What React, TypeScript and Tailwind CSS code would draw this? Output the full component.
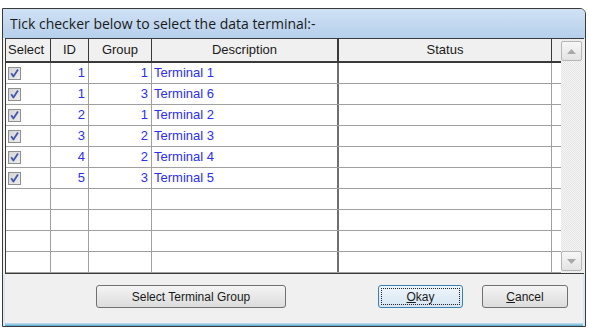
import React from "react";

const rows = [
  { sel: true, id: "1", group: "1", desc: "Terminal 1" },
  { sel: true, id: "1", group: "3", desc: "Terminal 6" },
  { sel: true, id: "2", group: "1", desc: "Terminal 2" },
  { sel: true, id: "3", group: "2", desc: "Terminal 3" },
  { sel: true, id: "4", group: "2", desc: "Terminal 4" },
  { sel: true, id: "5", group: "3", desc: "Terminal 5" },
  null,
  null,
  null,
  null,
];

function Check() {
  return (
    <svg width="13" height="13" viewBox="0 0 13 13">
      <defs>
        <linearGradient id="cb" x1="0" y1="0" x2="1" y2="1">
          <stop offset="0" stopColor="#d4d4d4" />
          <stop offset="1" stopColor="#eeeeee" />
        </linearGradient>
      </defs>
      <rect x="0.5" y="0.5" width="12" height="12" fill="url(#cb)" stroke="#8e8f8f" />
      <path d="M3.2 6.3 L5.4 9.6 L10 2.6" stroke="#4257ad" strokeWidth="1.8" fill="none" strokeLinejoin="round" />
    </svg>
  );
}

function Arrow({ up }: { up: boolean }) {
  return (
    <svg width="9" height="5" viewBox="0 0 9 5">
      {up ? <path d="M0 5 L4.5 0 L9 5 Z" fill="#a8a8a8" /> : <path d="M0 0 L4.5 5 L9 0 Z" fill="#a8a8a8" />}
    </svg>
  );
}

const font = { fontFamily: '"Liberation Sans", Arial, sans-serif' };

export default function App() {
  return (
    <div className="w-[589px] h-[332px] bg-white pt-[8px] pl-[2px] overflow-hidden" style={font}>
      <div className="w-[584px] h-[319px] border border-[#3a3a3a] rounded-tr-[6px] flex flex-col overflow-hidden bg-[#f0f0f0]">
        {/* title */}
        <div className="h-[29px] shrink-0 flex items-center pl-[7px] text-[#1a1a1a] bg-gradient-to-b from-[#d0e1f4] to-[#b6cfeb]" style={{ fontFamily: '"Open Sans", "Liberation Sans", sans-serif', fontSize: "14px" }}>
          Tick checker below to select the data terminal:-
        </div>
        {/* grid */}
        <div className="ml-[2px] w-[579px] h-[236px] shrink-0 flex border-t border-l border-b border-[#3a3a3a] bg-white">
          <div className="w-[555px] flex flex-col">
            {/* header */}
            <div className="h-[24px] flex border-b-2 border-[#3a3a3a] bg-[#f0f0f0] text-[13px] text-[#1a1a1a]">
              <div className="w-[45px] border-r border-[#3a3a3a] flex items-center pl-[2px]">Select</div>
              <div className="w-[38px] border-r border-[#3a3a3a] flex items-center justify-center">ID</div>
              <div className="w-[63px] border-r border-[#3a3a3a] flex items-center justify-center">Group</div>
              <div className="w-[187px] border-r-2 border-[#3a3a3a] flex items-center justify-center">Description</div>
              <div className="w-[213px] border-r border-[#3a3a3a] flex items-center justify-center">Status</div>
              <div className="flex-1" />
            </div>
            {rows.map((r, i) => (
              <div key={i} className="h-[21px] flex border-b border-[#a0a0a0] text-[13px] text-[#2e2ef0]">
                <div className="w-[45px] border-r border-[#a0a0a0] flex items-center pl-[2px]">
                  {r?.sel ? <Check /> : null}
                </div>
                <div className="w-[38px] border-r border-[#a0a0a0] flex items-center justify-end pr-[3px]">{r?.id}</div>
                <div className="w-[63px] border-r border-[#a0a0a0] flex items-center justify-end pr-[3px]">{r?.group}</div>
                <div className="w-[187px] border-r-2 border-[#707070] flex items-center pl-[2px]">{r?.desc}</div>
                <div className="w-[213px] border-r border-[#a0a0a0]" />
                <div className="flex-1" />
              </div>
            ))}
          </div>
          {/* scrollbar */}
          <div className="flex-1 flex flex-col justify-between py-[2px] pr-[2px] bg-[#ebebeb]" style={{ backgroundImage: "repeating-conic-gradient(#f4f4f4 0 25%, #e6e6e6 0 50%)", backgroundSize: "2px 2px" }}>
            <div className="h-[20px] border border-[#b5b5b5] rounded-[2px] bg-gradient-to-b from-[#f7f7f7] to-[#e3e3e3] flex items-center justify-center">
              <Arrow up />
            </div>
            <div className="h-[20px] border border-[#b5b5b5] rounded-[2px] bg-gradient-to-b from-[#f7f7f7] to-[#e3e3e3] flex items-center justify-center">
              <Arrow up={false} />
            </div>
          </div>
        </div>
        {/* buttons */}
        <div className="flex-1 flex flex-col border-l-2 border-r-2 border-[#dbe7f4]">
          <div className="flex items-start pt-[11px] text-[12px] text-[#1a1a1a]">
            <div className="ml-[91px] w-[190px] h-[23px] border border-[#707070] rounded-[3px] bg-gradient-to-b from-[#f4f4f4] to-[#dcdcdc] flex items-center justify-center">
              Select Terminal Group
            </div>
            <div className="ml-[92px] w-[85px] h-[23px] border border-[#3c7fb1] rounded-[3px] bg-gradient-to-b from-[#eef6fc] to-[#d6e6f2] p-[2px]">
              <div className="w-full h-full border border-dotted border-[#222] flex items-center justify-center">
                <span><span className="underline">O</span>kay</span>
              </div>
            </div>
            <div className="ml-[19px] w-[86px] h-[23px] border border-[#707070] rounded-[3px] bg-gradient-to-b from-[#f4f4f4] to-[#dcdcdc] flex items-center justify-center">
              <span><span className="underline">C</span>ancel</span>
            </div>
          </div>
          <div className="mt-auto h-[3px] bg-gradient-to-b from-[#cfe1f3] to-[#4aa8c8]" />
        </div>
      </div>
    </div>
  );
}
